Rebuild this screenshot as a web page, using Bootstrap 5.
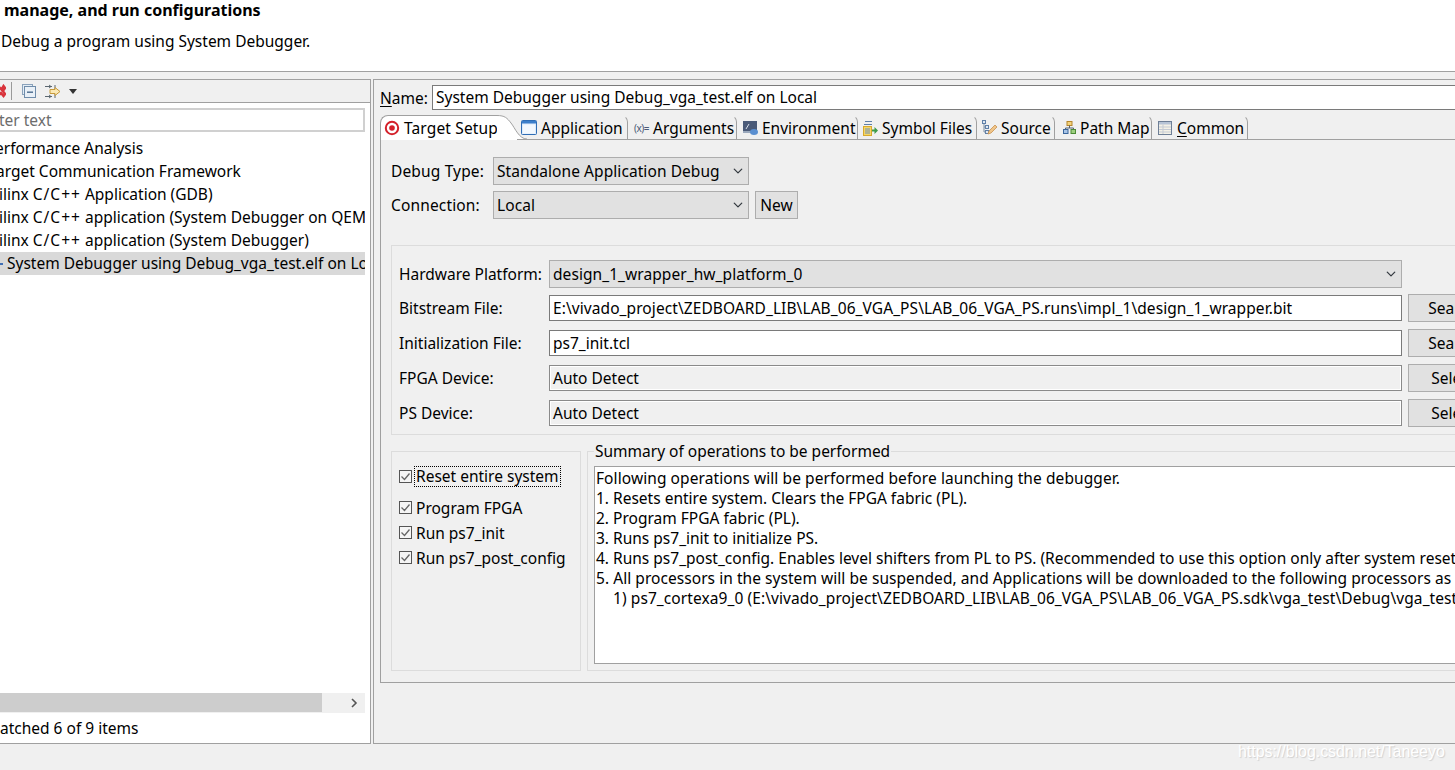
<!DOCTYPE html>
<html lang="en">
<head>
<meta charset="utf-8">
<title>Run configurations</title>
<link rel="stylesheet" href="https://cdn.jsdelivr.net/npm/bootstrap@5.3.0/dist/css/bootstrap.min.css">
<style>
html,body{height:770px;overflow:hidden}
body{background:#f0f0f0;color:#000;font-family:"Noto Sans","Liberation Sans",sans-serif;font-size:15.5px;line-height:20px;width:1455px;position:relative}
.dlg-head{height:72px;background:#fff;border-bottom:1px solid #a0a0a0;padding-left:4px}
.dlg-title{font-weight:700;font-size:16px;line-height:20px}
.dlg-sub{margin-top:11px;margin-left:-3px}
.dlg-main{margin-top:7px;height:665px;gap:2px}
.side-pane{width:371px;flex:none;border:1px solid #a0a0a0;border-left:0;background:#fff;overflow:hidden}
.side-bar{height:23px;background:#f0f0f0;border-bottom:1px solid #a0a0a0}
.side-filter{margin-top:5px;width:365px;height:24px;border:2px solid #d0d0d0;border-left:0;color:#6d6d6d;line-height:20px;white-space:nowrap;overflow:hidden}
.side-tree{margin-top:5px;width:365px;height:556px;overflow:hidden}
.tree-row{height:23px;line-height:23px;white-space:nowrap;overflow:hidden}
.tree-sel{background:#d9d9d9}
.plus{letter-spacing:1px}
.side-scroll{width:365px;height:20px;background:#f0f0f0}
.side-thumb{width:322px;height:19px;background:#cdcdcd}
.scroll-end{padding-right:7px}
.side-foot{padding-top:5px;white-space:nowrap;line-height:20px}
.main-pane{width:1200px;flex:none;border:1px solid #a0a0a0;border-right:0;padding:5px 0 0 6px}
.name-row{height:25px}
.name-label{width:52px;flex:none}
.u{text-decoration:underline;text-underline-offset:2px}
.field{height:26px;border:1px solid #7a7a7a;background:#fff;padding:0 3px;line-height:24px;white-space:nowrap;overflow:hidden;flex:none}
.field-off{background:#f0f0f0;box-shadow:inset 0 0 0 1px #fff;border-color:#8a8a8a}
.name-field{width:1100px;height:25px;line-height:23px}
.path-text{letter-spacing:.08px}
.wide-text{letter-spacing:.05px}
.tab-strip{margin-top:5px;height:25px;flex-wrap:nowrap}
.tab-on{width:117px;height:25px;flex:none;background:#fff;border:1px solid #a0a0a0;border-bottom:0;border-right:0;border-top-left-radius:8px;padding-left:3px;gap:4px;white-space:nowrap;letter-spacing:.15px}
.tab-curve{width:30px;height:25px;display:block;flex:none}
.tab-off{height:25px;border-right:1px solid #a0a0a0;border-bottom:1px solid #a0a0a0;border-top:1px solid transparent;border-top-right-radius:7px;gap:4px;white-space:nowrap;flex:none}
.tw-app{width:111px;margin-left:-10px;padding-left:4px}
.tw-arg{width:109px;padding-left:6px;gap:2px}
.tw-env{width:121px;padding-left:6px}
.tw-sym{width:119px;padding-left:5px}
.tw-src{width:78px;padding-left:5px}
.tw-map{width:97px;padding-left:8px}
.tw-com{width:96px;padding-left:6px;gap:5px}
.tab-rest{flex:1;height:25px;border-bottom:1px solid #a0a0a0}
.tab-body{height:543px;border:1px solid #a0a0a0;border-top:0;border-right:0;padding:17px 0 0 10px}
.type-row{height:28px;margin-bottom:6px}
.type-label{width:102px;flex:none;letter-spacing:.15px}
.pick{background-color:#e1e1e1;border:1px solid #adadad;border-radius:0;color:#000;font-family:inherit;font-size:15.5px;line-height:20px;padding:0 20px 0 3px;height:100%;box-shadow:none;background-position:right 4px center;background-size:12px 10px;letter-spacing:.07px}
.pick-small{width:256px;flex:none}
.pick-wide{width:853px;flex:none}
.dlg-btn{background:#e1e1e1;border:1px solid #adadad;border-radius:0;color:#000;font-size:15.5px;line-height:20px;padding:0;height:28px;flex:none;white-space:nowrap}
.btn-new{width:43px;margin-left:6px}
.btn-far{width:102px;margin-left:6px}
.group-hw{margin-top:26px;height:190px;width:1100px;border:1px solid #dcdcdc;border-right:0;padding:14px 0 0 7px}
.hw-row{height:28px;margin-bottom:7px}
.hw-row-first{margin-bottom:6px}
.hw-label{width:150px;flex:none}
.wide-field{width:853px}
.lower{margin-top:16px;gap:6px}
.group-check{width:190px;height:220px;border:1px solid #dcdcdc;padding:14px 0 0 7px;flex:none}
.check-row{gap:4px;height:25px}
.check-box{width:13px;height:13px;display:block;flex:none}
.check-focus{outline:1px dotted #000;padding:0 1px;margin-left:-1px;line-height:19px}
.check-first{height:20px;margin-bottom:9px}
.group-sum{width:1000px;height:220px;border:1px solid #dcdcdc;border-right:0;padding:14px 0 0 6px;position:relative;flex:none}
.sum-legend{position:absolute;left:6px;top:-11px;background:#f0f0f0;padding:0 1px;line-height:20px}
.sum-box{height:198px;width:990px;background:#fff;border:1px solid #a0a0a0;padding:1px 0 0 1px;white-space:nowrap;overflow:hidden;line-height:20px}
.sum-indent{padding-left:17px}
.ico{display:block;flex:none}
.ico-x{margin-left:-3px}
.ico-sep{margin-left:5px}
.ico-coll{margin-left:10px}
.ico-filt{margin-left:8px}
.ico-drop{margin-left:8px}
.vars{font-size:10px;color:#4a5a78;width:17px;flex:none;line-height:20px;letter-spacing:-.5px}
.off-a{margin-left:-1px}
.off-b{margin-left:-5px}
.off-c{margin-left:-4px}
.off-d{margin-left:-1px}
.off-e{margin-left:4px}
.mark-wm{position:absolute;left:1238px;top:741px;color:#fff;font-family:"Liberation Sans",sans-serif;font-size:15.9px;line-height:22px;text-shadow:1px 1px 1px #cfcfcf;white-space:nowrap}
</style>
</head>
<body>
<header class="dlg-head">
  <div class="dlg-title">manage, and run configurations</div>
  <div class="dlg-sub">Debug a program using System Debugger.</div>
</header>
<div class="dlg-main d-flex">
  <aside class="side-pane d-flex flex-column">
    <div class="side-bar d-flex align-items-center">
      <svg class="ico ico-x" width="9" height="14" viewBox="0 0 9 14"><path d="M1 2l3.500 3.500L6.500 2 8 4 5.800 7 8 10l-1.500 2-2.500-3-3 3" fill="none" stroke="#d9343c" stroke-width="2.400"/></svg>
      <svg class="ico ico-sep" width="1" height="18"><rect width="1" height="18" fill="#9a9a9a"/></svg>
      <svg class="ico ico-coll" width="14" height="14" viewBox="0 0 14 14"><rect x=".5" y=".5" width="10" height="10" fill="#e4edf5" stroke="#8aa2bb"/><rect x="2.500" y="2.500" width="11" height="11" fill="#e9f0f7" stroke="#6f8caa"/><rect x="5" y="7.500" width="6" height="1.400" fill="#4b6a8c"/></svg>
      <svg class="ico ico-filt" width="17" height="15" viewBox="0 0 17 15"><path d="M1 2.500h7M1 12.500h7M5 1l2 1.500L5 4M5 11l2 1.500L5 14M11 1v4M11 10v4" fill="none" stroke="#5b6770"/><path d="M6 5.500h5V3.500l5 4-5 4V9.500H6z" fill="#fbe8b4" stroke="#c89a3a"/></svg>
      <svg class="ico ico-drop" width="8" height="5" viewBox="0 0 8 5"><path d="M0 0h8L4 5z" fill="#333"/></svg>
    </div>
    <div class="side-filter"><span class="off-a">ter text</span></div>
    <div class="side-tree">
      <div class="tree-row"><span class="off-b">erformance Analysis</span></div>
      <div class="tree-row"><span class="off-c">arget Communication Framework</span></div>
      <div class="tree-row"><span class="off-d">ilinx <span class="plus">C/C++</span> Application (GDB)</span></div>
      <div class="tree-row"><span class="off-d">ilinx <span class="plus">C/C++</span> application (System Debugger on QEMU)</span></div>
      <div class="tree-row"><span class="off-d">ilinx <span class="plus">C/C++</span> application (System Debugger)</span></div>
      <div class="tree-row tree-sel d-flex align-items-center">
        <svg class="ico" width="3" height="6" viewBox="0 0 3 6"><rect y="2" width="3" height="2" fill="#3f6fb5"/></svg>
        <span class="off-e">System Debugger using Debug_vga_test.elf on Local</span>
      </div>
    </div>
    <div class="side-scroll d-flex">
      <div class="side-thumb"></div>
      <div class="flex-grow-1 d-flex align-items-center justify-content-end scroll-end"><svg class="ico" width="8" height="10" viewBox="0 0 8 10"><path d="M2 1l4 4-4 4" fill="none" stroke="#555" stroke-width="1.600"/></svg></div>
    </div>
    <div class="side-foot">atched 6 of 9 items</div>
  </aside>
  <main class="main-pane">
    <div class="name-row d-flex align-items-center">
      <div class="name-label"><span class="u">N</span>ame:</div>
      <div class="field name-field">System Debugger using Debug_vga_test.elf on Local</div>
    </div>
    <ul class="nav tab-strip list-unstyled mb-0">
      <li class="tab-on d-flex align-items-center">
        <svg class="ico" width="16" height="16" viewBox="0 0 16 16"><circle cx="8" cy="8" r="6.200" fill="#fff" stroke="#d4202a" stroke-width="2"/><circle cx="8" cy="8" r="2.800" fill="#d4202a"/></svg>
        <span>Target Setup</span>
      </li>
      <li><svg class="tab-curve" viewBox="0 0 30 25"><path d="M0 0C8 0 10 3 14 8S22 24 30 24V25H0z" fill="#fff"/><path d="M0 .5C8 .5 10 3 14 8S22 24 30 24" fill="none" stroke="#a0a0a0"/></svg></li>
      <li class="tab-off tw-app d-flex align-items-center">
        <svg class="ico" width="16" height="15" viewBox="0 0 16 15"><rect x=".5" y=".5" width="15" height="14" rx="1" fill="#dcebfa" stroke="#2f6db5"/><rect x="1" y="1" width="14" height="2.500" fill="#3c7fcb"/><rect x="2" y="4.500" width="12" height="9" fill="#f2f8fe"/></svg>
        <span>Application</span>
      </li>
      <li class="tab-off tw-arg d-flex align-items-center">
        <span class="vars">(x)=</span>
        <span>Arguments</span>
      </li>
      <li class="tab-off tw-env d-flex align-items-center">
        <svg class="ico" width="15" height="14" viewBox="0 0 15 14"><rect y="0" width="14" height="10" fill="#4a5a78"/><path d="M3 8l3-5" stroke="#d8dee8"/><rect x="0" y="10" width="8" height="2" fill="#9aa8bc"/><ellipse cx="11" cy="11" rx="4" ry="3" fill="#5a8fd0"/></svg>
        <span>Environment</span>
      </li>
      <li class="tab-off tw-sym d-flex align-items-center">
        <svg class="ico" width="15" height="16" viewBox="0 0 15 16"><path d="M2 1.500h7M1 4.500h8" stroke="#5f7fa8"/><rect x=".5" y="6.500" width="8" height="9" fill="#f4d667" stroke="#d8a92b"/><path d="M2 9h5M2 11h5M2 13h5" stroke="#6d8fc0"/><path d="M9 9.500h2.500V7l3.500 3.500-3.500 3.500v-2.500H9z" fill="#3e9b4a"/></svg>
        <span>Symbol Files</span>
      </li>
      <li class="tab-off tw-src d-flex align-items-center">
        <svg class="ico" width="15" height="16" viewBox="0 0 15 16"><rect x=".5" y=".5" width="3" height="3" fill="#dfe8f2" stroke="#5f7fa8"/><rect x="3.500" y="5.500" width="3" height="3" fill="#dfe8f2" stroke="#5f7fa8"/><rect x="3.500" y="10.500" width="3" height="3" fill="#dfe8f2" stroke="#5f7fa8"/><path d="M2 4v8h1.500M2 7h1.500" fill="none" stroke="#7d8fa5"/><path d="M6 14l1-3 6-6 2 2-6 6z" fill="#f0c58a" stroke="#c9924e" stroke-width=".8"/></svg>
        <span>Source</span>
      </li>
      <li class="tab-off tw-map d-flex align-items-center">
        <svg class="ico" width="13" height="13" viewBox="0 0 13 13"><rect x="4" y=".5" width="5" height="4" fill="#f3d27a" stroke="#b5862c"/><path d="M6.500 4.500v2.500M2.500 9V7h8v2" fill="none" stroke="#55606e"/><rect x=".5" y="8.500" width="4.500" height="4" fill="#a8c4e6" stroke="#3a669c"/><rect x="8" y="8.500" width="4.500" height="4" fill="#9ccf7f" stroke="#4b8a35"/></svg>
        <span>Path Map</span>
      </li>
      <li class="tab-off tw-com d-flex align-items-center">
        <svg class="ico" width="14" height="14" viewBox="0 0 14 14"><rect x=".5" y=".5" width="13" height="13" fill="#f4f1e6" stroke="#6e7f96"/><rect x="1" y="1" width="12" height="2.500" fill="#b7c4d6"/><path d="M1 6h12M1 8.500h12M1 11h12M5 3.500V13" stroke="#c5cbd4"/></svg>
        <span><span class="u">C</span>ommon</span>
      </li>
      <li class="tab-rest"></li>
    </ul>
    <section class="tab-body">
      <div class="type-row d-flex align-items-center">
        <div class="type-label">Debug Type:</div>
        <select class="form-select pick pick-small"><option>Standalone Application Debug</option></select>
      </div>
      <div class="type-row d-flex align-items-center">
        <div class="type-label">Connection:</div>
        <select class="form-select pick pick-small"><option>Local</option></select>
        <button type="button" class="btn dlg-btn btn-new">New</button>
      </div>
      <div class="group-hw">
        <div class="hw-row hw-row-first d-flex align-items-center">
          <div class="hw-label">Hardware Platform:</div>
          <select class="form-select pick pick-wide"><option>design_1_wrapper_hw_platform_0</option></select>
        </div>
        <div class="hw-row d-flex align-items-center">
          <div class="hw-label">Bitstream File:</div>
          <div class="field wide-field path-text">E:\vivado_project\ZEDBOARD_LIB\LAB_06_VGA_PS\LAB_06_VGA_PS.runs\impl_1\design_1_wrapper.bit</div>
          <button type="button" class="btn dlg-btn btn-far">Search...</button>
        </div>
        <div class="hw-row d-flex align-items-center">
          <div class="hw-label">Initialization File:</div>
          <div class="field wide-field">ps7_init.tcl</div>
          <button type="button" class="btn dlg-btn btn-far">Search...</button>
        </div>
        <div class="hw-row d-flex align-items-center">
          <div class="hw-label">FPGA Device:</div>
          <div class="field field-off wide-field">Auto Detect</div>
          <button type="button" class="btn dlg-btn btn-far">Select...</button>
        </div>
        <div class="hw-row d-flex align-items-center">
          <div class="hw-label">PS Device:</div>
          <div class="field field-off wide-field">Auto Detect</div>
          <button type="button" class="btn dlg-btn btn-far">Select...</button>
        </div>
      </div>
      <div class="lower d-flex">
        <div class="group-check">
          <div class="check-row check-first d-flex align-items-center">
            <svg class="check-box" viewBox="0 0 13 13"><rect x=".5" y=".5" width="12" height="12" fill="#f5f5f5" stroke="#555"/><path d="M2.500 6.500l3 3 5-6" fill="none" stroke="#666" stroke-width="1.300"/></svg>
            <span class="check-focus">Reset entire system</span>
          </div>
          <div class="check-row d-flex align-items-center">
            <svg class="check-box" viewBox="0 0 13 13"><rect x=".5" y=".5" width="12" height="12" fill="#f5f5f5" stroke="#555"/><path d="M2.500 6.500l3 3 5-6" fill="none" stroke="#666" stroke-width="1.300"/></svg>
            <span>Program FPGA</span>
          </div>
          <div class="check-row d-flex align-items-center">
            <svg class="check-box" viewBox="0 0 13 13"><rect x=".5" y=".5" width="12" height="12" fill="#f5f5f5" stroke="#555"/><path d="M2.500 6.500l3 3 5-6" fill="none" stroke="#666" stroke-width="1.300"/></svg>
            <span>Run ps7_init</span>
          </div>
          <div class="check-row d-flex align-items-center">
            <svg class="check-box" viewBox="0 0 13 13"><rect x=".5" y=".5" width="12" height="12" fill="#f5f5f5" stroke="#555"/><path d="M2.500 6.500l3 3 5-6" fill="none" stroke="#666" stroke-width="1.300"/></svg>
            <span>Run ps7_post_config</span>
          </div>
        </div>
        <div class="group-sum">
          <div class="sum-legend">Summary of operations to be performed</div>
          <div class="sum-box">
            <div class="path-text">Following operations will be performed before launching the debugger.</div>
            <div>1. Resets entire system. Clears the FPGA fabric (PL).</div>
            <div>2. Program FPGA fabric (PL).</div>
            <div>3. Runs ps7_init to initialize PS.</div>
            <div>4. Runs ps7_post_config. Enables level shifters from PL to PS. (Recommended to use this option only after system reset or board power on)</div>
            <div class="wide-text">5. All processors in the system will be suspended, and Applications will be downloaded to the following processors as specified in the Applications tab</div>
            <div class="sum-indent path-text">1) ps7_cortexa9_0 (E:\vivado_project\ZEDBOARD_LIB\LAB_06_VGA_PS\LAB_06_VGA_PS.sdk\vga_test\Debug\vga_test.elf)</div>
          </div>
        </div>
      </div>
    </section>
  </main>
</div>
<div class="mark-wm">https://blog.csdn.net/Taneeyo</div>
<script src="https://cdn.jsdelivr.net/npm/bootstrap@5.3.0/dist/js/bootstrap.bundle.min.js"></script>
</body>
</html>
